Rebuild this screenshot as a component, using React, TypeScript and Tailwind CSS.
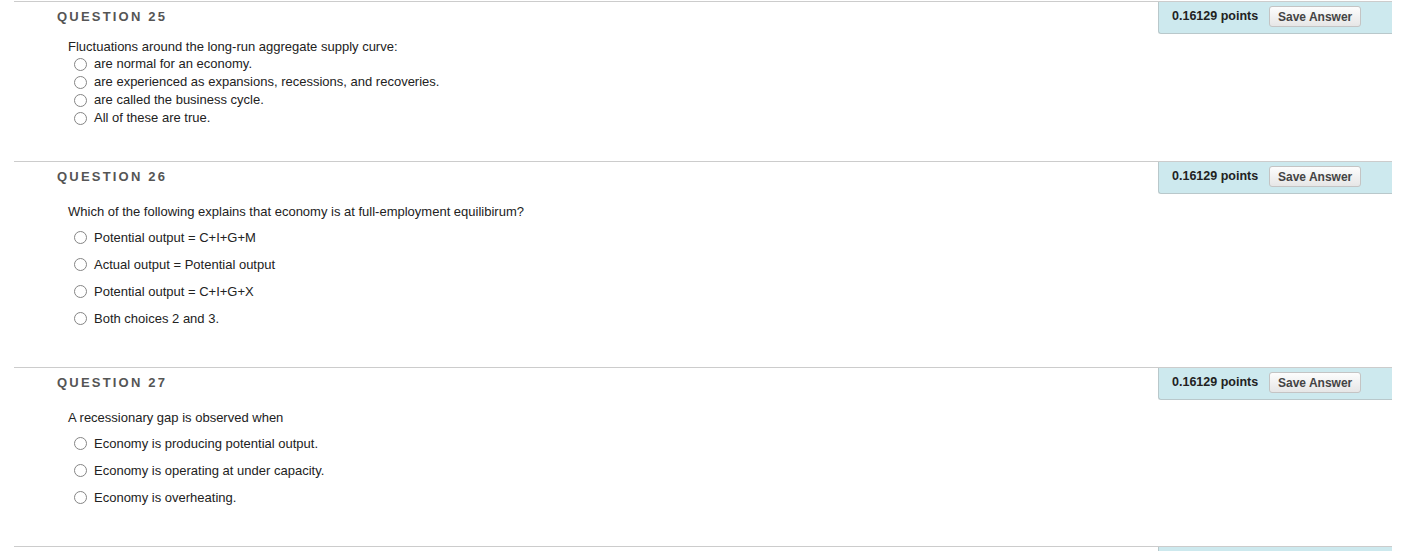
import React from "react";

type Q = {
  num: number;
  text: string;
  options: string[];
  compact?: boolean;
  textMt: string;
  optMt: string;
  pb: string;
};

const questions: Q[] = [
  {
    num: 25,
    text: "Fluctuations around the long-run aggregate supply curve:",
    options: [
      "are normal for an economy.",
      "are experienced as expansions, recessions, and recoveries.",
      "are called the business cycle.",
      "All of these are true.",
    ],
    compact: true,
    textMt: "mt-[5px]",
    optMt: "mt-0",
    pb: "pb-[34px]",
  },
  {
    num: 26,
    text: "Which of the following explains that economy is at full-employment equilibirum?",
    options: [
      "Potential output = C+I+G+M",
      "Actual output = Potential output",
      "Potential output = C+I+G+X",
      "Both choices 2 and 3.",
    ],
    textMt: "mt-[10px]",
    optMt: "mt-[4px]",
    pb: "pb-[35px]",
  },
  {
    num: 27,
    text: "A recessionary gap is observed when",
    options: [
      "Economy is producing potential output.",
      "Economy is operating at under capacity.",
      "Economy is overheating.",
    ],
    textMt: "mt-[10px]",
    optMt: "mt-[4px]",
    pb: "pb-[35px]",
  },
];

function Box({ empty }: { empty?: boolean }) {
  return (
    <div className="w-[234px] h-[32px] bg-[#cde9ee] border-l border-b border-[#b9c8cb] rounded-bl-[3px] flex items-start pl-[13px] pt-[4px]">
      <div className="h-[21px] flex items-center gap-[11px]">
        {empty ? (
          <>
            <span className="w-[88px]" />
            <span className="h-[21px] w-[92px] rounded-[3px] border border-[#c4c4c4] bg-gradient-to-b from-[#fdfdfd] to-[#e6e6e6]" />
          </>
        ) : (
          <>
            <span className="text-[12.5px] font-bold text-[#222222] leading-none">0.16129 points</span>
            <button className="h-[21px] w-[92px] rounded-[3px] border border-[#c4c4c4] bg-gradient-to-b from-[#fdfdfd] to-[#e6e6e6] text-[12px] font-bold text-[#444444] leading-none">
              Save Answer
            </button>
          </>
        )}
      </div>
    </div>
  );
}

function Header({ num }: { num: number }) {
  return (
    <div className="flex justify-between items-start">
      <div className="pl-[43px] pt-[7px] text-[13px] leading-[16px] font-bold tracking-[2.2px] text-[#555555]">
        QUESTION {num}
      </div>
      <Box />
    </div>
  );
}

function Radio() {
  return <span className="inline-block w-[13px] h-[13px] rounded-full border border-[#858585] bg-white" />;
}

export default function App() {
  return (
    <div className="w-[1407px] h-[551px] overflow-hidden bg-white pt-[1px] font-['Liberation_Sans',Arial,sans-serif] text-[#222222]">
      <div className="ml-[14px] w-[1378px]">
        {questions.map((q) => (
          <section key={q.num} className={`border-t border-[#cccccc] ${q.pb}`}>
            <Header num={q.num} />
            <div className={`pl-[54px] ${q.textMt} text-[13px] leading-[16px]`}>{q.text}</div>
            <div className={q.optMt}>
              {q.options.map((o) => (
                <div
                  key={o}
                  className={`flex items-center pl-[60px] text-[13px] ${q.compact ? "h-[18px]" : "h-[27px]"}`}
                >
                  <Radio />
                  <span className="ml-[7px]">{o}</span>
                </div>
              ))}
            </div>
          </section>
        ))}
        <section className="border-t border-[#cccccc] flex justify-end">
          <Box empty />
        </section>
      </div>
    </div>
  );
}
